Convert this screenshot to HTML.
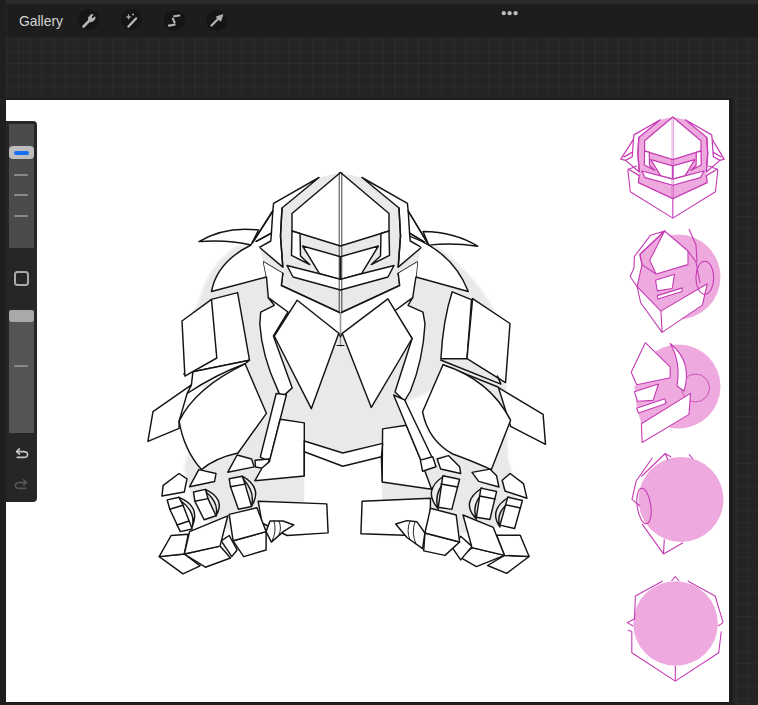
<!DOCTYPE html>
<html><head><meta charset="utf-8">
<style>
html,body{margin:0;padding:0;}
body{width:758px;height:705px;overflow:hidden;position:relative;background:#262626;font-family:"Liberation Sans",sans-serif;}
.abs{position:absolute;}
#topstrip{left:0;top:0;width:758px;height:4.3px;background:#2b2b2b;}
#toolbar{left:7px;top:4.3px;width:751px;height:33px;background:#1d1d1d;}
#grid{left:0;top:37px;width:758px;height:668px;
 background-color:#242424;
 background-image:linear-gradient(to right, rgba(255,255,255,0.032) 1px, transparent 1px),linear-gradient(to bottom, rgba(255,255,255,0.032) 1px, transparent 1px);
 background-size:11.77px 11.77px;background-position:6.2px 2.5px;}
#leftstrip{left:0;top:0;width:6px;height:705px;background:#1f1f1f;}
#canvas{left:6px;top:100px;width:723px;height:602px;background:#fff;overflow:hidden;}
#canvshadow{left:6px;top:98px;width:727px;height:607px;background:#1c1c1c;}
#bottomstrip{left:0;top:702px;width:733px;height:3px;background:#1e1e1e;}
.gallery{left:19px;top:12.5px;font-size:13.9px;color:#d4d4d4;letter-spacing:0;}
.ib{width:21px;height:21px;border-radius:50%;background:#151515;}
#sidebar{left:6px;top:121px;width:31px;height:381px;background:#262626;border-radius:0 4px 4px 0;}
.track{left:3px;width:25px;background:#4b4b4b;}
.tick{left:8px;width:14px;height:2px;background:#8a8a8a;border-radius:1px;}
</style></head><body>
<div class="abs" id="grid"></div>
<div class="abs" id="topstrip"></div>
<div class="abs" id="toolbar"></div>
<div class="abs" id="leftstrip"></div>
<div class="abs" id="canvshadow"></div>
<div class="abs" id="bottomstrip"></div>
<div class="abs gallery">Gallery</div>
<div class="abs ib" style="left:78px;top:9px;"></div>
<div class="abs ib" style="left:121px;top:9px;"></div>
<div class="abs ib" style="left:164px;top:10px;"></div>
<div class="abs ib" style="left:206px;top:10px;"></div>
<svg class="abs" style="left:0;top:0" width="758" height="40">
 <g stroke="#b4b4b4" fill="none" stroke-linecap="round">
  <!-- wrench -->
  <path d="M83.5 26.5 L90 20" stroke-width="2.6"/>
  <path d="M89 21.5 C87.5 18 89.5 14.5 93 14.5 L91 17 L92.5 18.8 L95 16.8 C95.5 20 92.5 22.5 89 21.5Z" fill="#b4b4b4" stroke-width="1"/>
  <!-- wand -->
  <path d="M128.5 26.5 L136 18.5" stroke-width="2.4"/>
  <path d="M128.6 14.6 L129.2 16.4 L131 17 L129.2 17.6 L128.6 19.4 L128 17.6 L126.2 17 L128 16.4 Z" fill="#b4b4b4" stroke-width="0.5"/>
  <circle cx="133" cy="14.5" r="0.9" fill="#b4b4b4" stroke="none"/>
  <!-- S -->
  <path d="M174.2 16.2 L179.4 15.5 M172.9 18.6 L174.6 22.6 M168.9 25.6 L174.6 24.8" stroke-width="2.1"/>
  <!-- arrow -->
  <path d="M211.5 25.5 L219 18" stroke-width="2.2"/>
  <path d="M222.5 14.8 L216.3 16.9 L220.4 21 Z" fill="#b4b4b4" stroke-width="1"/>
 </g>
 <circle cx="503.8" cy="13.2" r="2.1" fill="#bdbdbd"/>
 <circle cx="509.6" cy="13.2" r="2.1" fill="#bdbdbd"/>
 <circle cx="515.6" cy="13.2" r="2.1" fill="#bdbdbd"/>
</svg>

<div class="abs" id="canvas">
<svg class="abs" style="left:0;top:0" width="723" height="602" viewBox="6 100 723 602">
<defs>
 <filter id="soft" x="-5%" y="-5%" width="110%" height="110%"><feGaussianBlur stdDeviation="0.9"/></filter>
 <g id="helm">
  <path d="M319,177.5 L282,208 L280.5,236 L282.8,267 L282.8,273.5 L281.3,285.5 L340.5,313 L399.7,285.5 L398.2,273.5 L398.2,267 L400.5,236 L399,208 L362,177.5 L340.5,172.5 Z" style="fill:var(--g)" stroke="none"/>
  <path d="M319,177.5 L273.6,203.4 L272.8,211 L251,245 L259.4,247.3 L282.8,267.1 L280.5,236 L282,208 Z"/>
  <path d="M272.8,211 L271.4,233.1 L255.8,241.6 M271.4,233.1 L270.8,241 L259.4,247.3" fill="none"/>
  <path d="M362,177.5 L407.4,203.4 L408.2,211 L428.8,245.1 L421.6,247.3 L398.2,267.1 L400.5,236 L399,208 Z"/>
  <path d="M408.2,211 L409.6,233.1 L424.5,242 M409.6,233.1 L410.2,241 L421.6,247.3" fill="none"/>
  <path d="M263.6,262.1 L282.8,273.5 L281.3,285.5 L340.5,313 L399.7,285.5 L398.2,273.5 L417.4,262.1" fill="none"/>
  <path d="M340.5,172.5 L292,213.5 L292,231 L340.5,246 L389,231 L389,213.5 Z"/>
  <path d="M292,231 L300,233.5 L300.5,256 L309.7,264.5 L291.5,255.3 Z"/>
  <path d="M389,231 L381,233.5 L380.5,256 L371.3,264.5 L389.5,255.3 Z"/>
  <path d="M302.6,246 L340.5,256.7 L340.5,279.4 L319.6,273.8 Z"/>
  <path d="M378.4,246 L340.5,256.7 L340.5,279.4 L361.4,273.8 Z"/>
  <path d="M287,265.5 L319.6,273.8 L340.5,279.4 L361.4,273.8 L394,265.5 L388,277 L340.5,290 L293,277 Z"/>
  <path d="M282,208 L280.5,236 L282.8,267 M399,208 L400.5,236 L398.2,267" fill="none"/>
  <path d="M339.2,172.5 L339.2,313 M341.8,172.5 L341.8,313" fill="none" stroke-width="0.8"/>
 </g>
</defs>
<g fill="#fff" stroke="#141414" stroke-width="1.45" stroke-linejoin="round" stroke-linecap="round">
 <!-- gray backdrop -->
 <path d="M251,245 L236,246 Q208,266 199,300 L184,330 L196,372 L206,393 L192,440 L184,468 L192,500 Q200,530 262,535 L420,535 Q505,535 516,515 Q520,490 508,460 L506,380 Q505,330 490,303 Q470,270 437,246 L429,245 L408,211 L340,180 L272,211 Z" fill="#e9e9e9" stroke="none" filter="url(#soft)"/>
 <use href="#helm" style="--g:#e9e9e9"/>
 <!-- blades -->
 <path d="M199,241.6 Q225,226 258.5,230 L251,245 Q228,239.5 199,241.6 Z"/>
 <path d="M272.8,211 L251,245 M255.8,241.6 L271.4,233.1 M408.2,211 L428.8,245.1 M424.5,242 L409.6,233.1" fill="none"/>
 <!-- shoulder domes -->
 <path d="M251,245 Q217,262 211.5,291.5 L266.5,277 L263.6,262.1 L259.4,247.3 L255.8,241.6 Z" stroke="none"/>
 <path d="M251,245 Q217,262 211.5,291.5 L266.5,277 L263.6,262.1 L282.8,273.5" fill="none"/>
 <path d="M410.6,236.6 Q452.7,252 468.3,291.5 L415.9,277 L417.4,262.1 L421.6,247.3 Z" stroke="none"/>
 <path d="M410.6,236.6 Q452.7,252 468.3,291.5 L415.9,277 L417.4,262.1 L398.2,273.5" fill="none"/>
 <path d="M477.6,246.2 Q455,232 423,231.5 L428.8,245.1 Q453,242.5 477.6,246.2 Z"/>
 <!-- neck -->
 <path d="M266.5,277 L263.6,262.1 L282.8,273.5 L281.3,285.5 L340.5,313 L399.7,285.5 L398.2,273.5 L417.4,262.1 L415.9,277 L412.7,297.7 L393,312 L387.9,298.9 L340.5,334 L297,300.2 L288,312 L268.3,297.7 Z" stroke="none"/>
 <path d="M266.5,277 L268.3,297.7 M415.9,277 L412.7,297.7 M282.8,273.5 L281.3,285.5 L340.5,313 L399.7,285.5 L398.2,273.5" fill="none"/>
 
 <!-- collars -->
 <path d="M268.3,297.7 L288,312 L273.4,336 L292.2,387.9 L281.1,398.1 L276.9,387.9 Q262,356 259.8,324 L260.7,312.1 L274.3,305.3 Z"/>
 <path d="M412.7,297.7 L393,312 L412.1,338.5 L395,392 L404.5,401 L410.5,391 Q423,360 425,324 L423,312.1 L408,305.3 Z"/>
 <!-- chest plates -->
 <path d="M297.2,300.2 L338.8,333.3 L311.3,408.7 L274.3,336 Z"/>
 <path d="M387.9,298.9 L342.2,333.3 L371.3,407.4 L412.1,338.5 Z"/>
 <path d="M340.5,313 L340.5,346" fill="none" stroke="#999" stroke-width="1.6"/>
 <path d="M338.8,333.3 L340.5,337 L342.2,333.3 M337,345.5 L344,345.5" fill="none" stroke-width="1.1"/>
 
 <!-- pads left -->
 <path d="M211.5,299.4 L237.6,292.6 L249.5,360.2 L192.9,371.8 L184,374.3 Z"/>
 <path d="M182,321 L211.5,299.4 L216.8,358 L184.9,376.1 Z"/>
 <!-- elbow guard left -->
 <path d="M179.1,421.1 L187.1,393.5 L245.1,363.8 L249.5,360.2 L192.9,371.8 Z" stroke="none"/>
 <path d="M249.5,360.2 L192.9,371.8 L191.4,384.8 L187.1,393.5 Q215,375 245.1,363.8 L249.5,360.2" fill="none"/>
 <path d="M153,411.7 L191.4,384.8 L187.1,393.5 L179.1,421.1 L179.1,428.4 L147.9,441.4 Z"/>
 <!-- upper arm left -->
 <path d="M179.1,421.1 Q195,388 245.1,363.8 L266.4,413.3 L238,453 Q215,458 201.5,469.6 Q184,450 179.1,421.1 Z"/>
 <path d="M186,470 Q220,457 238,453" fill="none" stroke="none"/>
 <!-- forearm stick left + cuff -->
 <path d="M276.2,393.5 L286.4,394.7 L269.4,461.6 L260.3,457.1 Z"/>
 <path d="M255,460.3 L268.7,459 L270,469.6 L255.5,467 Z"/>
 <!-- hip blocks -->
 <path d="M280.2,419.3 L304.3,422.9 L304.3,476 L254.8,480.8 L262,468 L269.4,461.6 Z"/>
 <path d="M382.6,428.9 L406.3,425.3 L421.3,461.3 L431.6,489.2 L382.1,482 Z"/>
 <!-- white center below pelvis -->
 <path d="M304.3,451.8 L342.8,466.3 L381.4,456.7 L382.1,482 L382,600 L304,600 L304.3,476 Z" stroke="none"/>
 <path d="M304.3,476 L304.3,451.8 M382.1,482 L381.4,456.7" fill="none"/>
 <path d="M304.3,441 L342.8,453 L382.6,443.4 L381.4,456.7 L342.8,466.3 L304.3,451.8 Z"/>
 <!-- pads right -->
 <path d="M452.2,291.8 L471.5,299.7 L467,358.7 L440.9,358.7 Q443,320 452.2,291.8 Z"/>
 <path d="M472.6,298.6 L510,323.5 L505.5,382.6 L467,358.7 Z"/>
 <path d="M440.6,360 L500.9,384.1 L497.4,376 M443,364.8 L498,387" fill="none"/>
 <!-- elbow guard right -->
 <path d="M498.5,387.7 L543.1,414.3 L545.5,444.4 L510.6,426.3 Z"/>
 <path d="M403,403 Q418,398 436,388 L422.6,411.8 Q426,440 452.7,454 L432.2,457.7 Z" stroke="none" filter="url(#soft)"/>
 <!-- upper arm right -->
 <path d="M443,364.8 Q490,380 510.6,420.3 L491.3,469.7 Q470,460 452.7,454 Q428,440 422.6,411.8 Z"/>
 <!-- forearm stick right + cuff -->
 <path d="M393.6,395 L404.5,399.8 L432.2,457.7 L421.3,461.3 Z"/>
 <path d="M420.4,460.1 L432.7,456.7 L436,466.8 L422.6,471.3 Z"/>
 <!-- fist bars -->
 <path d="M258.2,501.2 L326.8,503.9 L328.1,532.9 L287.2,535.5 L262,523 Z"/>
 <path d="M362.1,501.3 L430.5,498.2 L430,533 L404.7,535.2 L360.9,533.8 Z"/>
 <!-- left hand -->
 <path d="M161.9,496 L163.2,485.4 L179,473.5 L187,478.8 L184.3,492 Z"/>
 <path d="M189.6,486.7 L198.8,469.6 L216,473.5 L214.6,481.5 Z"/>
 <path d="M227.8,472.2 L237.1,455 L251.6,459 L254.2,466.9 Z"/>
 <path d="M179,497.3 Q201,506 192.2,527 Q196,512 181,501 Z" fill="#eee"/>
 <path d="M205.4,489.4 Q226,499 216,516 Q219,503 207,493 Z" fill="#eee"/>
 <path d="M242.3,476.2 Q263,488 251.6,506 Q255,492 244,480 Z" fill="#eee"/>
 <path d="M167.2,499.9 L179,497.3 L183,505.2 L192.2,529 L180.3,531.6 L169.8,509.2 Z"/>
 <path d="M169.8,509.2 L183,505.2 M177,525 L189,521" fill="none"/>
 <path d="M193.5,492 L205.4,489.4 L208,498.6 L216,515.8 L204.1,519.7 L194.9,501.2 Z"/>
 <path d="M194.9,501.2 L208,498.6" fill="none"/>
 <path d="M229.2,478.8 L242.3,476.2 L245,484.1 L251.6,506.5 L238.4,509.2 L230.5,486.7 Z"/>
 <path d="M230.5,486.7 L245,484.1" fill="none"/>
 <path d="M159.2,556.6 L183,573.8 L200.1,565.9 L184.3,554 Z"/>
 <path d="M159.2,556.6 L171.1,535.5 L188.3,534.2 L184.3,554 Z"/>
 <path d="M184.3,554 L205.4,567.2 L230.5,558 L220,546.1 Z"/>
 <path d="M221.2,540.8 L229.2,535.5 L237.1,550 L231.8,556.6 Z"/>
 <path d="M184.3,554 L189.6,531.6 L227.8,515.8 L220,546.1 Z"/>
 <path d="M233.1,540.8 L243.7,556.6 L266.1,550 L266.1,531.6 Z"/>
 <path d="M229.2,514.4 L256.9,507.8 L266.1,531.6 L233.1,540.8 Z"/>
 <path d="M266.1,531.6 L270,521 L283.2,521 L293.8,525 L283.2,531.6 L271.4,542.1 Z"/>
 <path d="M274,521 Q277,531 272,541 M279,521 Q282,528 279,535" fill="none" stroke-width="0.9"/>
 <!-- right hand -->
 <path d="M437.2,459 L448.4,455.6 L459.6,466.8 L460.7,473.5 L440.6,469 Z"/>
 <path d="M472,472.4 L489.9,469.1 L496.6,475.8 L498.9,487 L478.7,481.4 Z"/>
 <path d="M502.2,480.3 L510.1,473.5 L523.5,483.6 L526.9,498.2 L505,491 Z"/>
 <path d="M444,476 Q422,490 438.3,509 Q433,494 446,480 Z" fill="#eee"/>
 <path d="M482,488 Q460,502 476.4,519 Q471,504 484,492 Z" fill="#eee"/>
 <path d="M509,497 Q488,510 500,527 Q495,512 511,501 Z" fill="#eee"/>
 <path d="M442.8,475.8 L459.6,479.2 L451.8,509.4 L438.3,507.2 Z"/>
 <path d="M441,484 L457.5,487" fill="none"/>
 <path d="M480.9,488.1 L496.6,491.5 L489.9,519.5 L476.4,517.3 Z"/>
 <path d="M479.5,496 L495,499" fill="none"/>
 <path d="M507.8,497.1 L522.4,500.5 L514.6,528.5 L500,525.1 Z"/>
 <path d="M506.5,505 L520.5,508" fill="none"/>
 <path d="M504.5,555.4 L487.6,565.5 L506.7,573.3 L529.1,556.5 Z"/>
 <path d="M496.6,535.2 L520.2,535.2 L529.1,556.5 L504.5,555.4 Z"/>
 <path d="M472,547.6 L460.7,557.7 L476.4,566.6 L504.5,555.4 Z"/>
 <path d="M452.9,548.7 L460.7,536.3 L472,546.4 L460.7,559.9 Z"/>
 <path d="M463,515 L493.3,527.4 L504.5,555.4 L472,547.6 Z"/>
 <path d="M424.9,533 L423.7,550.9 L445,555.4 L459.6,542 Z"/>
 <path d="M430.5,508.3 L456.2,515 L459.6,542 L424.9,533 Z"/>
 <path d="M395.7,524 L406.9,520.6 L417,521.8 L424.9,533 L422.6,548.7 L406.9,537.5 Z"/>
 <path d="M410,521 Q406,531 410,540 M415,521.5 Q411,533 416,544" fill="none" stroke-width="0.9"/>
</g>
<!-- thumbnails -->
<g stroke="#c53bb3" stroke-width="1.1" fill="#fff" stroke-linejoin="round">
 <use href="#helm" transform="translate(474.8,16.6) scale(0.5815)" style="--g:#eeaade" stroke-width="2.1"/>
 <path d="M627.8,169.6 L630.3,191.8 L672.8,218.1 L715.4,191.8 L717.9,169.6 M672.8,198.6 L672.8,218.1" fill="none"/>
 <path d="M637,166 L627.8,169.6 M708.5,166 L717.9,169.6" fill="none"/>
 <!-- T2 -->
 <circle cx="678" cy="277" r="42.5" fill="#eeaade" stroke="none"/>
 <path d="M664.6,231 L639.9,254.4 L642,264.6 L637,286 L660.9,311.1 L707.2,283.8 L697,262 L688,251 Z" fill="#eeaade" stroke="none"/>
 <path d="M664.6,231 L650.6,235.2 L634.4,256.5 L634,268 L630.1,276.5 L637.1,286.7 L642,264.6 L639.9,254.4 Z"/>
 <path d="M664.6,231 L688,251 L688,264.6 L656.1,274 L649.7,260.3 Z"/>
 <path d="M664.6,231 L639.9,254.4 L642,264.6 L656.1,274" fill="none"/>
 <path d="M655.5,280.2 L674.5,274.3 L672.2,288.5 L657.3,290.9 Z"/>
 <path d="M657.3,295.6 L682.3,287.9 L682,291.5 L657.9,299 Z"/>
 <path d="M637.1,286.7 L660.9,311.1 L707.2,283.8 L702.4,305.1 L662.1,332.4 L640.7,302.8 Z"/>
 <path d="M660.9,311.1 L662.1,332.4 M688,251 L696,262 L700,283 M689,229 L696,245 L697,262" fill="none"/>
 <ellipse cx="704.8" cy="277.8" rx="8.9" ry="16.6" fill="none"/>
 <!-- T3 -->
 <circle cx="678.5" cy="386.5" r="42" fill="#eeaade" stroke="none"/>
 <path d="M634.4,386 L636.7,408.2 L641.4,423.8 L690.5,393.4 L681.2,389.5 L676.5,366 L670.2,366.9 L670.2,377.8 Z" fill="#eeaade" stroke="none"/>
 <circle cx="695.5" cy="388" r="14" fill="none" stroke-width="0.8"/>
 <path d="M645.3,342.7 L670.2,366.9 L670.2,377.8 L636.7,384.8 L631.2,372.3 Z"/>
 <path d="M670.2,343.5 Q693,362 684,391 L677,386 Q681,362 670.2,343.5 Z"/>
 <path d="M634.4,391.8 L658.5,384 L653.1,400.4 L637.5,401.2 Z"/>
 <path d="M636.7,408.2 L664.8,398.8 L666.3,403.5 L638.5,413 Z"/>
 <path d="M641.4,423.8 L690.5,393.4 L689,414.4 L642.2,442.5 Z"/>
 <!-- T4 -->
 <circle cx="681" cy="499.5" r="42.5" fill="#eeaade" stroke="none"/>
 <ellipse cx="644" cy="506" rx="6.8" ry="17.9" fill="none" stroke-width="1.1" transform="rotate(-8 644 506)"/>
 <path d="M652.4,457.8 L636.3,480.7 L632,499.4 L640,506 M641.4,476.5 L665.2,453.5 L671.1,456.9 M665.2,453.5 L668,460 M689,454.4 L693,459 M642.2,524.1 L663.5,553.9 L664.3,539.4 M663.5,553.9 L683,542.8" fill="none"/>
 <!-- T5 -->
 <circle cx="675.5" cy="623.5" r="42.3" fill="#eeaade" stroke="none"/>
 <path d="M662.8,581 L635.4,596 L634.5,619 L627.4,622.6 L633,626 M631.8,631.5 L631.8,652.7 L675.3,681.1 L718.7,652.7 L721.3,631.5 M723.1,622.6 L715.1,596 L687.7,581 M675.3,666 L675.3,681.1 M671.5,581 L675.3,576.5 L679,581 M718,626 L723.1,622.6 M627.8,630 L631.8,631.5" fill="none" stroke-width="1.1"/>
</g>
</svg>


</div>

<div class="abs" id="sidebar">
 <div class="abs track" style="top:2.5px;height:124px;"></div>
 <div class="abs" style="left:3px;top:25px;width:25px;height:13px;background:#bdbdbd;border-radius:4px;"></div>
 <div class="abs" style="left:7.5px;top:29.5px;width:15px;height:4px;background:#1670f5;border-radius:2px;"></div>
 <div class="abs tick" style="top:53px;"></div>
 <div class="abs tick" style="top:72.5px;"></div>
 <div class="abs tick" style="top:94px;"></div>
 <div class="abs" style="left:8px;top:150px;width:10.5px;height:10.5px;border:2px solid #a9a9a9;border-radius:3.5px;"></div>
 <div class="abs track" style="top:189px;height:123px;background:#545454;"></div>
 <div class="abs" style="left:3px;top:189px;width:25px;height:12px;background:#a9a9a9;border-radius:3px;"></div>
 <div class="abs tick" style="top:244px;"></div>
 <svg class="abs" style="left:0;top:320px" width="31" height="60">
  <g fill="none" stroke-linecap="round" stroke-linejoin="round">
   <path d="M10.8 10.6 L17.6 10.6 C20.4 10.6 21.6 12.2 21.6 13.4 C21.6 15 20.4 16.4 17.8 16.4 L11.2 16.4" stroke="#c4c4c4" stroke-width="1.6"/>
   <path d="M13.4 7.9 L10.6 10.6 L13.4 13.2" stroke="#c4c4c4" stroke-width="1.6"/>
   <path d="M20.2 41.6 L13.4 41.6 C10.6 41.6 9.4 43.2 9.4 44.4 C9.4 46 10.6 47.4 13.2 47.4 L19.8 47.4" stroke="#555" stroke-width="1.6"/>
   <path d="M17.6 38.9 L20.4 41.6 L17.6 44.2" stroke="#555" stroke-width="1.6"/>
  </g>
 </svg>
</div>
</body></html>
